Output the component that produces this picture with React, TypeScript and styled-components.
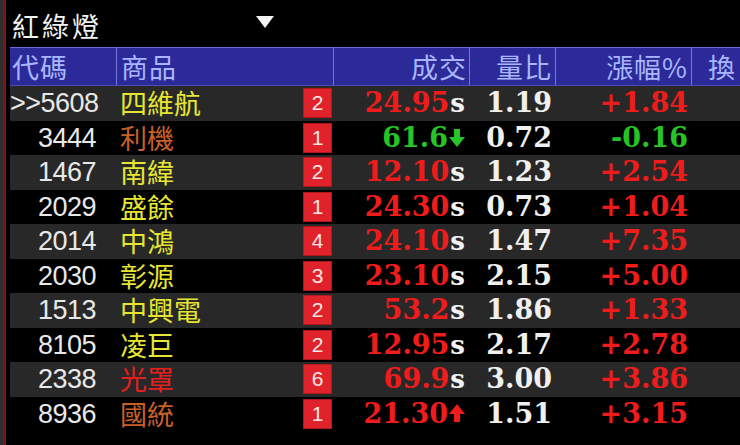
import React from "react";
import styled, { createGlobalStyle } from "styled-components";

const Global = createGlobalStyle`
  html, body { margin: 0; padding: 0; background: #000; }
  body { width: 740px; height: 445px; overflow: hidden; }
`;

const Page = styled.div`
  width: 740px;
  height: 445px;
  background: #2e2e2e;
  padding-left: 3px;
  box-sizing: border-box;
  overflow: hidden;
`;

const Panel = styled.div`
  height: 100%;
  background: #000;
  border-left: 3px solid #7c1616;
  padding-left: 4px;
  box-sizing: border-box;
  display: flex;
  flex-direction: column;
  overflow: hidden;
`;

const TitleBar = styled.div`
  height: 47px;
  display: flex;
  align-items: center;
  box-sizing: border-box;
  padding: 4px 0 0 2px;
`;

const Title = styled.div`
  font-family: "Noto Sans CJK TC", sans-serif;
  font-size: 27px;
  letter-spacing: 3px;
  color: #f2f2f2;
  width: 243px;
  line-height: 1;
`;

const Caret = styled.svg`
  width: 20px;
  height: 12px;
  margin-top: -8px;
`;

const cols = "106px 217px 136px 86px 136px 1fr";

const HeaderRow = styled.div`
  display: grid;
  grid-template-columns: ${cols};
  height: 39px;
  background: #2b2a98;
  border-top: 1px solid #6a6ad8;
  border-bottom: 1px solid #4a4ab8;
  box-sizing: border-box;
`;

const HeadCell = styled.div<{ $align: "left" | "right"; $pad: number; $first?: boolean }>`
  display: flex;
  align-items: center;
  justify-content: ${(p) => (p.$align === "left" ? "flex-start" : "flex-end")};
  padding: 0 ${(p) => (p.$align === "right" ? p.$pad : 0)}px 0 ${(p) => (p.$align === "left" ? p.$pad : 0)}px;
  border-left: ${(p) => (p.$first ? "none" : "1px solid #7474dc")};
  font-family: "Noto Sans CJK TC", sans-serif;
  font-size: 27px;
  letter-spacing: 1px;
  color: #a9b6ff;
  white-space: nowrap;
  overflow: hidden;
  box-sizing: border-box;
`;

const Row = styled.div<{ $odd: boolean }>`
  display: grid;
  grid-template-columns: ${cols};
  height: 34.5px;
  background: ${(p) => (p.$odd ? "#282828" : "#000")};
  align-items: center;
`;

const Code = styled.div`
  font-family: "Liberation Sans", sans-serif;
  font-size: 27px;
  line-height: 30px;
  color: #e8e8e8;
  text-align: right;
  padding-right: 20px;
  white-space: nowrap;
  letter-spacing: -0.5px;
`;

const NameCell = styled.div`
  display: flex;
  align-items: center;
  justify-content: space-between;
  padding: 0 1px 0 4px;
  height: 100%;
`;

const Name = styled.div<{ $color: string }>`
  font-family: "Noto Sans CJK TC", sans-serif;
  font-size: 27px;
  line-height: 30px;
  height: 30px;
  color: ${(p) => p.$color};
  white-space: nowrap;
`;

const Badge = styled.span`
  width: 29px;
  height: 30px;
  background: #e0222a;
  color: #fbe6e6;
  display: flex;
  align-items: center;
  justify-content: center;
  font-family: "Liberation Sans", sans-serif;
  font-size: 21px;
  box-shadow: inset 0 0 0 1px #b01820;
`;

const Num = styled.div<{ $pad: number }>`
  display: flex;
  align-items: center;
  justify-content: flex-end;
  padding-right: ${(p) => p.$pad}px;
  font-family: "DejaVu Serif", serif;
  font-weight: bold;
  font-size: 27px;
  line-height: 30px;
  white-space: nowrap;
`;

const Val = styled.span<{ $color: string }>`
  color: ${(p) => p.$color};
`;

const Suffix = styled.span`
  color: #f2f2f2;
  font-size: 26px;
  margin-left: 1px;
`;

const Arrow = styled.svg`
  width: 16px;
  height: 21px;
  margin-left: 1px;
`;

const RED = "#f01c1c";
const GREEN = "#26c426";
const WHITE = "#f0f0f0";
const YELLOW = "#e6e632";
const BROWN = "#c8602a";
const NRED = "#e4201e";

type R = {
  code: string;
  name: string;
  nc: string;
  badge: string;
  price: string;
  pc: string;
  suf: "s" | "up" | "down";
  ratio: string;
  chg: string;
  cc: string;
};

const rows: R[] = [
  { code: ">>5608", name: "四維航", nc: YELLOW, badge: "2", price: "24.95", pc: RED, suf: "s", ratio: "1.19", chg: "+1.84", cc: RED },
  { code: "3444", name: "利機", nc: BROWN, badge: "1", price: "61.6", pc: GREEN, suf: "down", ratio: "0.72", chg: "-0.16", cc: GREEN },
  { code: "1467", name: "南緯", nc: YELLOW, badge: "2", price: "12.10", pc: RED, suf: "s", ratio: "1.23", chg: "+2.54", cc: RED },
  { code: "2029", name: "盛餘", nc: YELLOW, badge: "1", price: "24.30", pc: RED, suf: "s", ratio: "0.73", chg: "+1.04", cc: RED },
  { code: "2014", name: "中鴻", nc: YELLOW, badge: "4", price: "24.10", pc: RED, suf: "s", ratio: "1.47", chg: "+7.35", cc: RED },
  { code: "2030", name: "彰源", nc: YELLOW, badge: "3", price: "23.10", pc: RED, suf: "s", ratio: "2.15", chg: "+5.00", cc: RED },
  { code: "1513", name: "中興電", nc: YELLOW, badge: "2", price: "53.2", pc: RED, suf: "s", ratio: "1.86", chg: "+1.33", cc: RED },
  { code: "8105", name: "凌巨", nc: YELLOW, badge: "2", price: "12.95", pc: RED, suf: "s", ratio: "2.17", chg: "+2.78", cc: RED },
  { code: "2338", name: "光罩", nc: NRED, badge: "6", price: "69.9", pc: RED, suf: "s", ratio: "3.00", chg: "+3.86", cc: RED },
  { code: "8936", name: "國統", nc: BROWN, badge: "1", price: "21.30", pc: RED, suf: "up", ratio: "1.51", chg: "+3.15", cc: RED },
];

function ArrowIcon({ dir, color }: { dir: "up" | "down"; color: string }) {
  const d =
    dir === "down"
      ? "M5 2 H11 V10 H16 L8 20 L0 10 H5 Z"
      : "M5 19 H11 V11 H16 L8 1 L0 11 H5 Z";
  return (
    <Arrow viewBox="0 0 16 21">
      <path d={d} fill={color} />
    </Arrow>
  );
}

export default function App() {
  return (
    <>
      <Global />
      <Page>
        <Panel>
          <TitleBar>
            <Title>紅綠燈</Title>
            <Caret viewBox="0 0 20 12">
              <path d="M1 0 H19 L10 12 Z" fill="#f4f4f4" />
            </Caret>
          </TitleBar>
          <HeaderRow>
            <HeadCell $align="left" $pad={2} $first>代碼</HeadCell>
            <HeadCell $align="left" $pad={4}>商品</HeadCell>
            <HeadCell $align="right" $pad={2}>成交</HeadCell>
            <HeadCell $align="right" $pad={3}>量比</HeadCell>
            <HeadCell $align="right" $pad={3}>漲幅%</HeadCell>
            <HeadCell $align="left" $pad={16}>換</HeadCell>
          </HeaderRow>
          {rows.map((r, i) => (
            <Row key={r.code} $odd={i % 2 === 0}>
              <Code>{r.code}</Code>
              <NameCell>
                <Name $color={r.nc}>{r.name}</Name>
                <Badge>{r.badge}</Badge>
              </NameCell>
              <Num $pad={4}>
                <Val $color={r.pc}>{r.price}</Val>
                {r.suf === "s" ? <Suffix>s</Suffix> : <ArrowIcon dir={r.suf} color={r.pc} />}
              </Num>
              <Num $pad={3}>
                <Val $color={WHITE}>{r.ratio}</Val>
              </Num>
              <Num $pad={3}>
                <Val $color={r.cc}>{r.chg}</Val>
              </Num>
              <div />
            </Row>
          ))}
        </Panel>
      </Page>
    </>
  );
}
